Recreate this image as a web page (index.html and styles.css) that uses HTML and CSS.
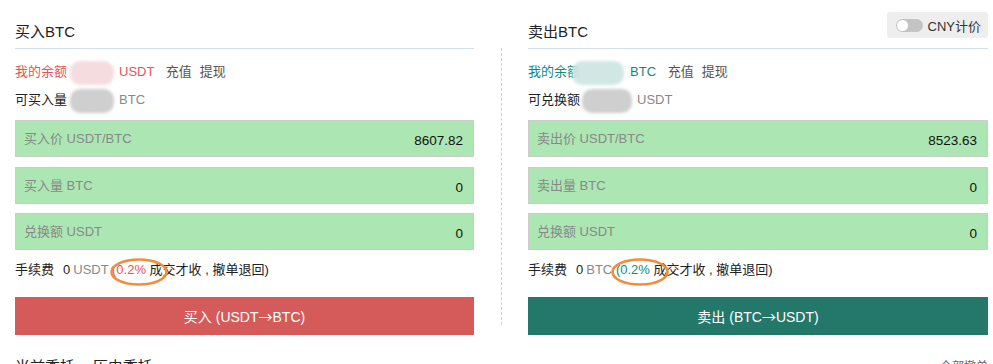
FILE: index.html
```html
<!DOCTYPE html>
<html>
<head>
    <meta charset="utf-8">
    <link rel="stylesheet" href="styles.css">
</head>
<body>
    <div class="trade">
        <div class="panel buy">
            <div class="panel-head">
                <h3>买入BTC</h3>
            </div>
            <div class="info-row balance">
                我的余额<span class="mask mask-pink"></span>USDT
                <a class="link">充值</a><a class="link">提现</a>
            </div>
            <div class="info-row">
                可买入量<span class="mask mask-grey"></span><span class="unit">BTC</span>
            </div>
            <div class="field">
                <span class="field-label">买入价 USDT/BTC</span>
                <span class="field-value">8607.82</span>
            </div>
            <div class="field">
                <span class="field-label">买入量 BTC</span>
                <span class="field-value">0</span>
            </div>
            <div class="field">
                <span class="field-label">兑换额 USDT</span>
                <span class="field-value">0</span>
            </div>
            <div class="fee">
                手续费<span class="fee-num">0</span><span class="unit">USDT</span>
                <span class="rate">(0.2%</span> 成交才收 , 撤单退回)
                <svg class="ring" width="60" height="30" viewBox="0 0 60 30">
                    <ellipse cx="30" cy="15" rx="27.5" ry="12.5" fill="none" stroke="#f28b3b" stroke-width="2.6"/>
                </svg>
            </div>
            <button class="btn">买入 (USDT<span class="arrow">→</span>BTC)</button>
        </div>

        <div class="divider"></div>

        <div class="panel sell">
            <div class="panel-head">
                <h3>卖出BTC</h3>
                <div class="cny-toggle">
                    <span class="switch"><span class="knob"></span></span>
                    CNY计价
                </div>
            </div>
            <div class="info-row balance">
                我的余额<span class="mask mask-teal"></span>BTC
                <a class="link">充值</a><a class="link">提现</a>
            </div>
            <div class="info-row">
                可兑换额<span class="mask mask-grey"></span><span class="unit">USDT</span>
            </div>
            <div class="field">
                <span class="field-label">卖出价 USDT/BTC</span>
                <span class="field-value">8523.63</span>
            </div>
            <div class="field">
                <span class="field-label">卖出量 BTC</span>
                <span class="field-value">0</span>
            </div>
            <div class="field">
                <span class="field-label">兑换额 USDT</span>
                <span class="field-value">0</span>
            </div>
            <div class="fee">
                手续费<span class="fee-num">0</span><span class="unit">BTC</span>
                <span class="rate">(0.2%</span> 成交才收 , 撤单退回)
                <svg class="ring" width="60" height="30" viewBox="0 0 60 30">
                    <ellipse cx="30" cy="15" rx="27.5" ry="12.5" fill="none" stroke="#f28b3b" stroke-width="2.6"/>
                </svg>
            </div>
            <button class="btn">卖出 (BTC<span class="arrow">→</span>USDT)</button>
        </div>
    </div>

    <div class="orders-head">
        <div class="tabs">
            <span class="tab">当前委托</span>
            <span class="tab">历史委托</span>
        </div>
        <span class="more">全部撤单</span>
    </div>
</body>
</html>
```

FILE: styles.css
```css
body {
    margin: 0;
    font-family: "Liberation Sans", "Noto Sans CJK SC", sans-serif;
    font-size: 13px;
    color: #222;
    background: #fff;
    overflow: hidden;
}
.trade {
    display: flex;
    padding-left: 15px;
}
.panel {
    width: 459px;
}
.sell {
    width: 460px;
}
.divider {
    margin: 48px 26px 10px 27px;
    border-left: 1px dashed #b8d6e6;
}
.panel-head {
    display: flex;
    justify-content: space-between;
    align-items: flex-start;
    border-bottom: 1px solid #cfe0ea;
    height: 48px;
}
.panel-head h3 {
    margin: 22px 0 0 0;
    font-size: 15px;
    font-weight: normal;
    line-height: 20px;
}
.cny-toggle {
    display: flex;
    align-items: center;
    margin-top: 12px;
    height: 26px;
    padding: 0 7px 0 9px;
    background: #eeeeee;
    border-radius: 3px;
    color: #333;
}
.switch {
    position: relative;
    width: 27px;
    height: 13px;
    margin-right: 5px;
    background: #c4c4c4;
    border-radius: 7px;
}
.knob {
    position: absolute;
    left: 1px;
    top: 1px;
    width: 11px;
    height: 11px;
    border-radius: 50%;
    background: #fff;
}
.info-row {
    height: 28px;
    line-height: 28px;
    color: #222;
}
.panel-head + .info-row {
    margin-top: 9px;
}
.buy .balance {
    color: #e5535d;
}
.sell .balance {
    color: #12897a;
}
.link {
    margin-left: 8px;
    color: #555;
}
.unit {
    color: #888;
}
.mask {
    display: inline-block;
    vertical-align: middle;
    width: 44px;
    height: 24px;
    margin: 0 5px 0 3px;
    border-radius: 10px;
    filter: blur(1.5px);
}
.mask-pink {
    background: #f5dcdf;
}
.mask-grey {
    background: #cfcfcf;
}
.mask-teal {
    width: 52px;
    margin-left: -8px;
    margin-right: 6px;
    background: #cfe6e3;
    opacity: 0.95;
}
.sell .mask-grey {
    width: 50px;
    margin-left: 2px;
}
.field {
    display: flex;
    justify-content: space-between;
    height: 35px;
    margin-top: 9.5px;
    padding: 0 10px 0 8px;
    background: #ace6b2;
    border: 1px solid #cccccc;
}
.info-row + .field {
    margin-top: 6px;
}
.field-label {
    padding-top: 7px;
    color: #888;
}
.field-value {
    padding-top: 12px;
    font-size: 13.5px;
    color: #111;
}
.fee {
    position: relative;
    margin-top: 10px;
    line-height: 20px;
    color: #222;
}
.fee-num {
    margin: 0 3px 0 9px;
}
.buy .rate {
    color: #e5535d;
}
.sell .rate {
    color: #12897a;
}
.ring {
    position: absolute;
    left: 94px;
    top: -3px;
}
.sell .ring {
    left: 82px;
}
.btn {
    display: block;
    width: 100%;
    height: 38px;
    margin-top: 17px;
    border: none;
    color: #fff;
    font-family: inherit;
    font-size: 14px;
}
.arrow {
    font-family: "Noto Sans CJK SC", sans-serif;
}
.buy .btn {
    background: #d55a5a;
}
.sell .btn {
    background: #24786a;
}
.orders-head {
    display: flex;
    justify-content: space-between;
    align-items: center;
    margin-top: 20px;
    padding: 0 5px 0 15px;
    height: 20px;
}
.tab {
    margin-right: 14px;
    font-size: 15px;
}
.more {
    font-size: 12px;
    color: #666;
}
```
